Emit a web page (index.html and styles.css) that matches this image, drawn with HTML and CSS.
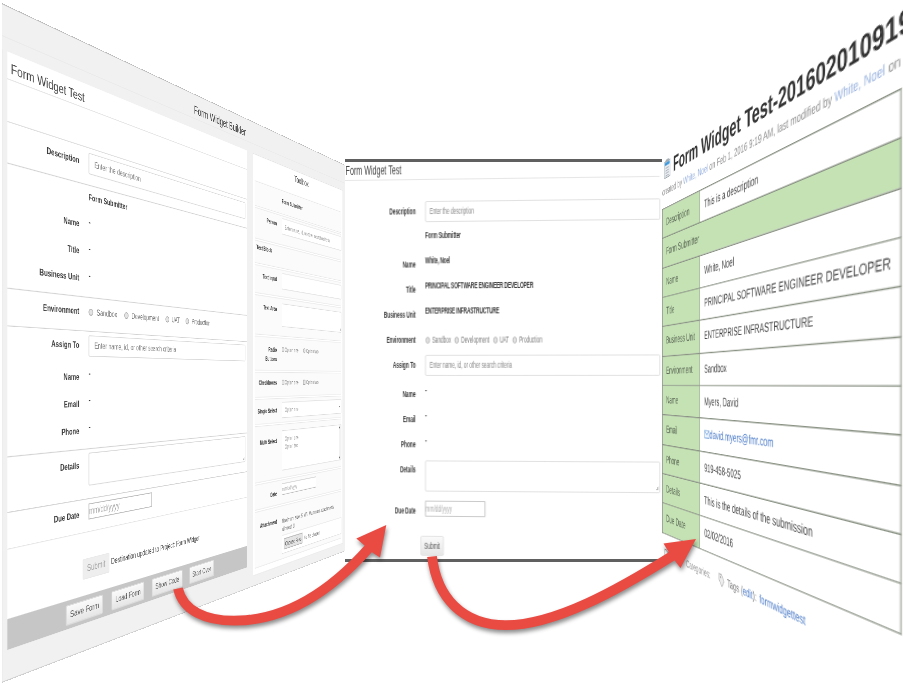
FILE: index.html
```html
<!DOCTYPE html>
<html lang="en">
<head>
<meta charset="utf-8">
<title>Form Widget</title>
<link rel="stylesheet" href="styles.css">
</head>
<body>
<section class="plane builder-plane">
<div class="builder">
  <header class="builder-head">Form Widget Builder</header>
  <div class="builder-body">
    <main class="editor">
      <h1 class="editor-title">Form Widget Test</h1>
      <div class="spacer"></div>
      <div class="block b-desc"><div class="row"><label>Description</label><div class="input">Enter the description</div></div></div>
      <div class="block b-sub">
        <div class="row short"><label></label><b>Form Submitter</b></div>
        <div class="row"><label>Name</label><b class="val">-</b></div>
        <div class="row"><label>Title</label><b class="val">-</b></div>
        <div class="row"><label>Business Unit</label><b class="val">-</b></div>
      </div>
      <div class="block b-env"><div class="row"><label>Environment</label>
        <div class="radios"><span><i></i>Sandbox</span><span><i></i>Development</span><span><i></i>UAT</span><span><i></i>Production</span></div></div></div>
      <div class="block b-assign">
        <div class="row first"><label>Assign To</label><div class="input">Enter name, id, or other search criteria</div></div>
        <div class="row"><label>Name</label><b class="val">-</b></div>
        <div class="row"><label>Email</label><b class="val">-</b></div>
        <div class="row"><label>Phone</label><b class="val">-</b></div>
      </div>
      <div class="block b-details"><div class="row"><label>Details</label><div class="input area"></div></div></div>
      <div class="block b-due"><div class="row"><label>Due Date</label><div class="date">mm/dd/yyyy</div></div></div>
      <div class="send"><span class="btn off">Submit</span><span>Destination updated to Project: Form Widget</span></div>
      <footer class="actions"><span class="btn">Save Form</span><span class="btn">Load Form</span><span class="btn">Show Code</span><span class="btn">Start Over</span></footer>
    </main>
  </div>
</div>
</section>

<section class="plane toolbox-plane">
  <div class="toolbox">
    <h2>Toolbox</h2>
    <div class="tool t1"><label></label><b>Form Submitter</b></div>
    <div class="tool t2"><label>Person</label><div class="input">Enter name, id, or other search criteria</div></div>
    <div class="tool t3"><b>Text Block</b></div>
    <div class="tool t4"><label>Text Input</label><div class="input"></div></div>
    <div class="tool t5"><label>Text Area</label><div class="input area"></div></div>
    <div class="tool t6"><label>Radio<br>Buttons</label><div class="radios"><span><i></i>Option one</span><span><i></i>Option two</span></div></div>
    <div class="tool t7"><label>Checkboxes</label><div class="radios square"><span><i></i>Option one</span><span><i></i>Option two</span></div></div>
    <div class="tool t8"><label>Single Select</label><div class="input select">Option one<em>▾</em></div></div>
    <div class="tool t9"><label>Multi Select</label><div class="input multi"><div>Option one<br>Option two</div><div class="scroll"><em>▴</em><em>▾</em></div></div></div>
    <div class="tool t10"><label>Date</label><div class="date">mm/dd/yyyy</div></div>
    <div class="tool t11"><label>Attachment</label><div class="attach">Maximum size: 5 MB. Maximum attachments allowed: 3<div class="file"><span>Choose Files</span>No file chosen</div></div></div>
  </div>
</section>

<section class="frame">
  <div class="plane form-plane">
  <div class="form">
    <h1>Form Widget Test</h1>
    <div class="row f-desc"><label>Description</label><div class="input">Enter the description</div></div>
    <div class="row f-sub"><label></label><b>Form Submitter</b></div>
    <div class="row"><label>Name</label><b class="val">White, Noel</b></div>
    <div class="row"><label>Title</label><b class="val">PRINCIPAL SOFTWARE ENGINEER DEVELOPER</b></div>
    <div class="row"><label>Business Unit</label><b class="val">ENTERPRISE INFRASTRUCTURE</b></div>
    <div class="row f-env"><label>Environment</label><div class="radios"><span><i></i>Sandbox</span><span><i></i>Development</span><span><i></i>UAT</span><span><i></i>Production</span></div></div>
    <div class="row f-assign"><label>Assign To</label><div class="input">Enter name, id, or other search criteria</div></div>
    <div class="row"><label>Name</label><b class="val">-</b></div>
    <div class="row"><label>Email</label><b class="val">-</b></div>
    <div class="row"><label>Phone</label><b class="val">-</b></div>
    <div class="row f-details"><label>Details</label><div class="input area"></div></div>
    <div class="row f-due"><label>Due Date</label><div class="date">mm/dd/yyyy</div></div>
    <span class="btn">Submit</span>
  </div>
  </div>
</section>

<section class="plane doc-plane">
<div class="doc">
  <h1><svg width="15" height="19" viewBox="0 0 15 19"><path d="M1 2h13v16H1z" fill="#e9edf1" stroke="#9aa2a9"/><path d="M4 0h7v3H4z" fill="#a5adb3"/><path d="M2 3h11v3H2z" fill="#3f9be0"/><path d="M3.500 8.500h8M3.500 11h8M3.500 13.500h8M3.500 16h8" stroke="#a8b0b6"/></svg>Form Widget Test-201602010919</h1>
  <p class="meta">created by <a>White, Noel</a> on Feb 1, 2016 9:19 AM, last modified by <a>White, Noel</a> on</p>
  <table>
    <tr><th>Description</th><td>This is a description</td></tr>
    <tr><th class="full" colspan="2">Form Submitter</th></tr>
    <tr><th>Name</th><td>White, Noel</td></tr>
    <tr><th>Title</th><td class="wide">PRINCIPAL SOFTWARE ENGINEER DEVELOPER</td></tr>
    <tr><th>Business Unit</th><td>ENTERPRISE INFRASTRUCTURE</td></tr>
    <tr><th>Environment</th><td>Sandbox</td></tr>
    <tr><th>Name</th><td>Myers, David</td></tr>
    <tr><th>Email</th><td><a><svg width="10" height="9" viewBox="0 0 10 9"><path d="M.5 1.500h9v6.500h-9zM.5 1.500l4.500 3.500 4.500-3.500" fill="#eef5fd" stroke="#8fb6e4"/></svg>david.myers@fmr.com</a></td></tr>
    <tr><th>Phone</th><td>919-458-5025</td></tr>
    <tr><th>Details</th><td>This is the details of the submission</td></tr>
    <tr><th>Due Date</th><td>02/02/2016</td></tr>
  </table>
  <div class="tags"><svg class="cat" width="12" height="11" viewBox="0 0 12 11"><path d="M1 2h4l1 1.500h5v6.500H1z" fill="none" stroke="#999"/></svg><span class="c">Categories:</span><svg width="11" height="12" viewBox="0 0 11 12"><path d="M1 1h4.500l4.500 5-4 5L1 6z" fill="#eee" stroke="#bbb"/><circle cx="3.500" cy="3.500" r="1" fill="#999"/></svg><span>Tags (<a>edit</a>):</span><a>formwidgettest</a></div>
</div>
</section>

<svg class="arrows" width="903" height="684" viewBox="0 0 903 684">
  <g fill="none" stroke="#e94b43" stroke-width="9.800">
    <path d="M178 588.500C183 611 206 620.700 234 620.700C286 620.700 330 592 369 548"/>
    <path d="M432 556.500C437 597 462 625.200 506 625.200C555 625.200 618 590 673 555.500"/>
  </g>
  <path fill="#e94b43" d="M386.300 525L356.300 538.500L364 545L373 553L380 557.500ZM696 539L663.500 543.500L668.300 551.500L675 561L680.500 568Z"/>
</svg>
</body>
</html>
```
FILE: styles.css
```css
* { box-sizing: border-box; }
html, body { height: 100%; }
body {
  margin: 0;
  position: relative;
  overflow: hidden;
  background: #fff;
  color: #444;
  font-family: "Liberation Sans", Arial, sans-serif;
}
h1, h2, p { margin: 0; font-weight: normal; }

/* Each plane tilts its page in perspective. The page inside is first scaled
   near its on-screen size, so that its text is rasterized at that size. */
.plane { position: absolute; left: 0; top: 0; transform-origin: 0 0; }
.plane > div { transform-origin: 0 0; }
.builder-plane {
  width: 456px; height: 578px;
  transform: matrix3d(0.7314, 0.3469, 0, 0.000918, 0, 1, 0, 0, 0, 0, 1, 0, 1.5, 3, 0, 1) scale(1.81818, 1.17647);
}
.toolbox-plane {
  width: 108px; height: 372px;
  transform: matrix3d(0.7314, 0.3469, 0, 0.000918, 0, 1, 0, 0, 0, 0, 1, 0, 1.5, 3, 0, 1) translate(503px, 46px) scale(2.941176, 1.666667);
}
.form-plane {
  top: -2.500px;
  width: 317px; height: 402px;
  transform: matrix3d(0.57, -0.00818, 0, -0.0000367, 0, 1, 0, 0, 0, 0, 1, 0, 0, 0, 0, 1) scaleX(1.754386);
}
.doc-plane {
  width: 270px; height: 573px;
  transform: matrix3d(-0.3818, -0.4659, 0, -0.0012106, 0, 1, 0, 0, 0, 0, 1, 0, 662.3, 209, 0, 1) translateY(-50px) scale(1.25, 0.714286);
}

/* Shared form parts */
.row { display: flex; align-items: center; }
.row label { text-align: right; font-weight: bold; color: #3a3a3a; }
.row b, .tool b { color: #3a3a3a; }
.input { background: #fff; border: 1px solid #d9d9d9; border-radius: 2px; color: #888; display: flex; align-items: center; }
.date { background: #fff; border: 1px solid #bbb; color: #aaa; display: flex; align-items: center; }
.area { position: relative; }
.area::after { content: ""; position: absolute; right: 2px; bottom: 2px; width: 5px; height: 4px; background: linear-gradient(135deg, transparent 50%, #bbb 50%); }
.radios { display: flex; color: #777; }
.radios span { display: flex; align-items: center; }
.radios i { width: 8px; height: 8px; border: 1px solid #aaa; border-radius: 50%; background: #e4e4e4; }
.radios.square i { border-radius: 1px; }
.btn { display: flex; align-items: center; justify-content: center; background: linear-gradient(#fafafa, #e6e6e6); border: 1px solid #ddd; border-radius: 2px; color: #555; }

/* Builder page */
.builder {
  width: 829px; height: 680px;
  font-size: 9.500px; line-height: 12px;
  background: #f1f1f1;
  border: 1px solid #b8b8b8; border-left-color: #ccc; border-bottom-color: #ccc;
  transform: scale(0.55, 0.85);
}
.builder-head { height: 45px; padding: 11px 0 0 2px; font-size: 14.800px; line-height: 18px; text-align: center; background: linear-gradient(#f1f1f1 31px, #ebebeb 31px, #ebebeb 32px, #f1f1f1 32px); }
.builder-body { display: flex; align-items: flex-start; padding-left: 7px; }
.editor { width: 478px; height: 602.500px; background: #fff; }
.editor-title { height: 27.500px; padding: 6px 0 0 5px; font-size: 14.600px; line-height: 20px; border-bottom: 1px solid #e4e4e4; }
.spacer { height: 43.500px; border-bottom: 1px solid #ddd; }
.block { border-bottom: 1px solid #d2d2d2; }
.editor .row { height: 30px; gap: 16px; }
.editor label { width: 110px; font-size: 9.500px; }
.editor .input { width: 348px; height: 24px; padding-left: 9px; }
.editor .val { margin-bottom: 8px; }
.editor .b-desc { height: 42px; padding-top: 1.500px; }
.editor .b-sub { height: 126px; }
.editor .short { height: 25px; margin-bottom: 5px; }
.editor .b-env { height: 37.500px; padding-top: 1px; }
.editor .b-assign { height: 132.500px; padding-top: 1px; }
.editor .first { margin-bottom: 5.500px; }
.editor .b-details { height: 55.500px; padding-top: 3.500px; }
.b-details .row { height: 37px; align-items: flex-start; }
.b-details label { padding-top: 7px; }
.editor .area { height: 37px; }
.editor .b-due { height: 37px; padding-top: 5px; border-bottom-color: #e4e4e4; }
.b-due .row { height: 18px; }
.b-due label { padding-top: 5px; }
.editor .date { width: 120px; height: 18px; font-size: 10.300px; }
.editor .radios span { gap: 6px; margin-right: 13.500px; }
.send { height: 70.500px; padding: 29px 0 0 116px; display: flex; align-items: flex-start; gap: 3px; line-height: 21px; }
.send .btn { width: 47px; height: 23px; background: #eee; border-color: #e9e9e9; color: #999; font-size: 10.300px; }
.actions { height: 30.500px; padding: 5px 0 0 88px; display: flex; gap: 16px; background: #c6c6c6; }
.actions .btn { width: 63px; height: 21.500px; font-size: 10.100px; }
.actions .btn:nth-child(3) { width: 67px; }
.actions .btn:nth-child(4) { width: 60px; }

/* Toolbox */
.toolbox {
  width: 316px; height: 619px; padding: 0 6px 0 5px;
  font-size: 9.500px; line-height: 12px;
  background: #fff; border: 1px solid #e6e6e6;
  transform: scale(0.34, 0.6);
}
.toolbox h2 { height: 38px; padding-top: 4px; font-size: 14.500px; line-height: 17px; text-align: center; }
.tool { display: flex; align-items: flex-start; gap: 16px; margin-bottom: 2px; background: #fbfbfb; border: 1px solid #e8e8e8; }
.tool label { width: 67px; flex: none; text-align: right; font-weight: bold; color: #333; }
.tool .input { width: 220px; flex: none; height: 25px; padding-left: 9px; border-color: #ddd; }
.tool .radios span { gap: 2px; margin-right: 17px; }
.t1 { height: 37px; padding-top: 10px; }
.t2 { height: 46px; padding-top: 3px; }
.t2 label, .t4 label { padding-top: 5px; }
.t3 { height: 34px; padding: 3px 0 0 4px; }
.t4 { height: 42px; padding-top: 4px; }
.t5 { height: 59px; padding-top: 7px; }
.t5 label { padding-top: 4px; }
.tool.t5 .input { height: 36px; }
.t6 { height: 51px; padding-top: 11px; }
.t6 label { line-height: 14px; }
.t7 { height: 38px; padding-top: 9px; }
.t8 { height: 38px; padding-top: 5px; }
.t8 label { padding-top: 7px; }
.tool .select { justify-content: space-between; padding-right: 3px; }
.select em, .scroll em { font-style: normal; font-size: 7px; color: #444; }
.t9 { height: 84px; padding-top: 9px; }
.t9 label { padding-top: 9px; }
.tool .multi { height: 62px; align-items: stretch; justify-content: space-between; }
.multi > div:first-child { padding-top: 7px; }
.scroll { width: 9px; display: flex; flex-direction: column; justify-content: space-between; background: #f2f2f2; line-height: 8px; }
.t10 { height: 38px; padding-top: 5px; }
.t10 label { padding-top: 8px; }
.t10 .date { width: 120px; height: 18px; }
.t11 { height: 83px; padding-top: 16px; margin: 0; }
.attach { width: 220px; flex: none; line-height: 13px; color: #666; }
.file { height: 29px; margin-top: 3px; padding-left: 6px; display: flex; align-items: center; gap: 4px; background: #fff; border: 1px solid #e0e0e0; }
.file span { border: 1px solid #aaa; background: #e4e4e4; padding: 1px 3px; color: #444; }

/* Published form */
.frame { position: absolute; left: 345px; top: 159px; width: 317px; height: 403px; border-top: 3px solid #606060; border-bottom: 3px solid #606060; }
.form {
  width: 556px; height: 402px;
  font-size: 8.500px; line-height: 10px;
  transform: scaleX(0.57);
}
.form h1 { height: 21px; padding: 4px 0 0 1px; width: 541px; font-size: 12.500px; line-height: 15px; border-bottom: 1px solid #e6e6e6; margin-bottom: 18.500px; }
.form .row { height: 25px; gap: 16.500px; }
.form label { width: 123.500px; font-size: 8.500px; letter-spacing: -.1px; }
.form b { letter-spacing: -.12px; }
.form .val { margin-bottom: 9px; font-size: 8.600px; letter-spacing: -.35px; }
.form .input { width: 402px; height: 21px; padding-left: 7px; letter-spacing: -.08px; }
.form .f-sub { height: 25px; margin: -1px 0 4px; }
.form .f-assign { margin-bottom: 4px; }
.form .radios { margin-left: 1px; font-size: 8.300px; }
.form .radios span { gap: 4px; margin-right: 6.500px; }
.form .radios i { width: 7px; height: 7px; }
.form .f-details { height: 31px; align-items: flex-start; margin-top: 3px; }
.form .f-details label { padding-top: 4px; }
.form .area { height: 31px; }
.form .f-due { height: 16px; margin-top: 9px; }
.form .f-due label { padding-top: 4px; }
.form .date { width: 104px; height: 16px; }
.form .btn { width: 40px; height: 20px; margin: 19px 0 0 132px; }

/* Resulting document */
.doc {
  width: 337px;
  font-size: 10.200px; line-height: 12px;
  transform: scale(0.8, 1.4);
}
.doc h1 { display: flex; align-items: center; gap: 6px; padding-left: 4px; height: 24px; font-size: 20.900px; line-height: 24px; font-weight: bold; color: #333; white-space: nowrap; }
.doc h1 svg { flex: none; }
.meta { height: 26px; padding-top: 4px; white-space: nowrap; color: #888; font-size: 9.500px; }
.meta a { color: #8fabdc; }
.doc table { width: 337px; height: 323px; border-collapse: collapse; table-layout: fixed; }
.doc th, .doc td { border: 1px solid #8a9284; height: 29.330px; padding: 0 8px; text-align: left; font-weight: normal; white-space: nowrap; }
.doc th { width: 80px; background: #c5e2b5; color: #5a6654; }
.doc td { background: #fff; }
.doc .wide { letter-spacing: .14px; }
.doc td a, .tags a { color: #4a7ac8; }
.doc td svg { vertical-align: -1px; }
.tags { display: flex; align-items: center; height: 38px; padding-left: 5px; white-space: nowrap; color: #777; font-size: 9.400px; }
.tags svg + span { margin: 0 4px; }
.tags svg.cat + .c { width: 62px; margin: 0 0 0 36px; color: #999; }

.arrows { position: absolute; left: 0; top: 0; filter: drop-shadow(1px 3px 2px rgba(0, 0, 0, .45)); }
```
